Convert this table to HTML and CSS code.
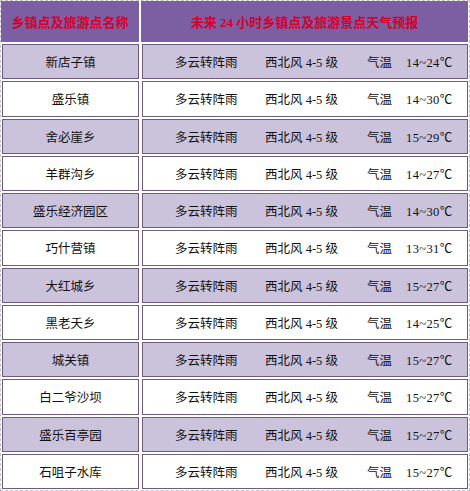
FILE: index.html
```html
<!DOCTYPE html>
<html lang="zh-CN">
<head>
<meta charset="utf-8">
<title>乡镇点及旅游点天气预报</title>
<link rel="stylesheet" href="styles.css">
</head>
<body>
<div class="board">
  <div class="head">
    <div class="hcell">乡镇点及旅游点名称</div>
    <div class="hcell">未来 24 小时乡镇点及旅游景点天气预报</div>
  </div>
  <div class="row alt"><div class="cell name">新店子镇</div><div class="cell info"><span class="w">多云转阵雨</span><span class="wind">西北风 4-5 级</span><span class="lbl">气温</span><span class="t">14~24℃</span></div></div>
  <div class="row"><div class="cell name">盛乐镇</div><div class="cell info"><span class="w">多云转阵雨</span><span class="wind">西北风 4-5 级</span><span class="lbl">气温</span><span class="t">14~30℃</span></div></div>
  <div class="row alt"><div class="cell name">舍必崖乡</div><div class="cell info"><span class="w">多云转阵雨</span><span class="wind">西北风 4-5 级</span><span class="lbl">气温</span><span class="t">15~29℃</span></div></div>
  <div class="row"><div class="cell name">羊群沟乡</div><div class="cell info"><span class="w">多云转阵雨</span><span class="wind">西北风 4-5 级</span><span class="lbl">气温</span><span class="t">14~27℃</span></div></div>
  <div class="row alt"><div class="cell name">盛乐经济园区</div><div class="cell info"><span class="w">多云转阵雨</span><span class="wind">西北风 4-5 级</span><span class="lbl">气温</span><span class="t">14~30℃</span></div></div>
  <div class="row"><div class="cell name">巧什营镇</div><div class="cell info"><span class="w">多云转阵雨</span><span class="wind">西北风 4-5 级</span><span class="lbl">气温</span><span class="t">13~31℃</span></div></div>
  <div class="row alt"><div class="cell name">大红城乡</div><div class="cell info"><span class="w">多云转阵雨</span><span class="wind">西北风 4-5 级</span><span class="lbl">气温</span><span class="t">15~27℃</span></div></div>
  <div class="row"><div class="cell name">黑老夭乡</div><div class="cell info"><span class="w">多云转阵雨</span><span class="wind">西北风 4-5 级</span><span class="lbl">气温</span><span class="t">14~25℃</span></div></div>
  <div class="row alt"><div class="cell name">城关镇</div><div class="cell info"><span class="w">多云转阵雨</span><span class="wind">西北风 4-5 级</span><span class="lbl">气温</span><span class="t">15~27℃</span></div></div>
  <div class="row"><div class="cell name">白二爷沙坝</div><div class="cell info"><span class="w">多云转阵雨</span><span class="wind">西北风 4-5 级</span><span class="lbl">气温</span><span class="t">15~27℃</span></div></div>
  <div class="row alt"><div class="cell name">盛乐百亭园</div><div class="cell info"><span class="w">多云转阵雨</span><span class="wind">西北风 4-5 级</span><span class="lbl">气温</span><span class="t">15~27℃</span></div></div>
  <div class="row"><div class="cell name">石咀子水库</div><div class="cell info"><span class="w">多云转阵雨</span><span class="wind">西北风 4-5 级</span><span class="lbl">气温</span><span class="t">15~27℃</span></div></div>
</div>
</body>
</html>
```

FILE: styles.css
```css
html, body {
  margin: 0;
  padding: 0;
  background: #ffffff;
}

.board {
  box-sizing: border-box;
  width: 470px;
  height: 491px;
  border: 1px dashed #c4c4c4;
  padding: 0 1px 1px 0;
  display: flex;
  flex-direction: column;
  gap: 2px;
  background: #ffffff;
  font-family: "Liberation Serif", "Noto Sans CJK SC", serif;
  font-size: 12.5px;
  color: #111111;
}

.head {
  height: 41px;
  flex: none;
  display: grid;
  grid-template-columns: 138px 1fr;
  gap: 2px;
}

.hcell {
  background: #7c5ea3;
  color: #d4002c;
  font-family: "Liberation Serif", "Noto Sans CJK SC", serif;
  font-weight: bold;
  font-size: 13px;
  display: flex;
  align-items: center;
  justify-content: center;
}

.row {
  flex: 1;
  display: grid;
  grid-template-columns: 137px 1fr;
  gap: 3px;
  margin-left: 1px;
}

.cell {
  border: 1px solid #6e5c80;
  background: #ffffff;
  display: flex;
  align-items: center;
}

.row.alt .cell {
  background: #cbc2dc;
}

.name {
  justify-content: center;
}

.info {
  padding-left: 32px;
}

.w {
  width: 90px;
}

.wind {
  width: 102px;
}

.lbl {
  width: 39px;
}

.t {
  letter-spacing: 0.4px;
}
```
